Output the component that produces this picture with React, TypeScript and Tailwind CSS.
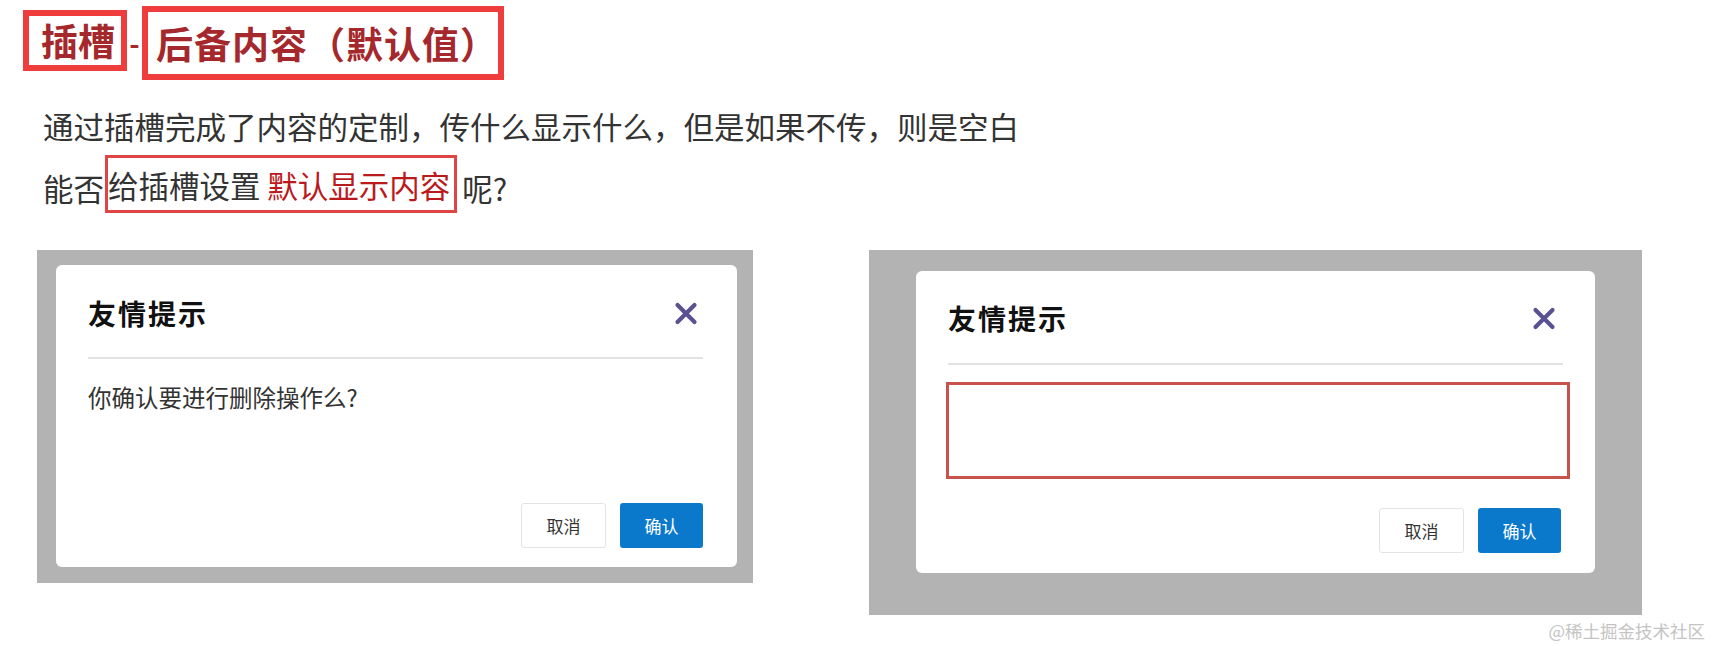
import React from "react";

const CJK = { fontFamily: '"Noto Sans CJK SC", "Noto Sans", sans-serif' };

function CloseX() {
  return (
    <svg width="24" height="23" viewBox="0 0 24 23" fill="none">
      <path d="M3.5 3 L20.5 20 M20.5 3 L3.5 20" stroke="#5a5190" strokeWidth="4.2" strokeLinecap="round" />
    </svg>
  );
}

function Buttons() {
  return (
    <div className="flex gap-[14px]">
      <button className="w-[85px] h-[45px] border border-[#e3e3e3] rounded-[3px] bg-white text-[17px] text-[#333]">
        取消
      </button>
      <button className="w-[83px] h-[45px] rounded-[3px] bg-[#0a79cc] text-[17px] text-white">
        确认
      </button>
    </div>
  );
}

export default function App() {
  return (
    <div className="relative w-[1713px] h-[646px] overflow-hidden bg-white" style={CJK}>
      {/* Title */}
      <div className="flex items-start pl-[23px] pt-[6px]">
        <div className="mt-[4px] h-[61px] border-[6px] border-[#ef3c3c] pl-[12px] pr-[6px] text-[37px] font-bold leading-[49px] text-[#a5282c]">
          插槽
        </div>
        <div className="w-[15px] h-[74px] text-center text-[28px] font-bold leading-[74px] text-[#a5282c]">-</div>
        <div className="h-[74px] border-[6px] border-[#ef3c3c] pl-[8px] pr-[0px] text-[37px] font-bold tracking-[1px] leading-[62px] text-[#a5282c]">
          后备内容（默认值）
        </div>
      </div>

      {/* Paragraphs */}
      <div className="pl-[43px] text-[30.5px] text-[#333]">
        <p className="mt-[26px] leading-[40px] whitespace-nowrap">
          通过插槽完成了内容的定制，传什么显示什么，但是如果不传，则是空白
        </p>
        <div className="mt-[9px] flex h-[58px] items-start whitespace-pre">
          <span className="pt-[8px] leading-[50px]">能否</span>
          <span className="ml-[1px] h-[58px] border-[3px] border-[#e04545] pt-[5px] pr-[4px] leading-[44px]">
            给插槽设置 <span className="text-[#bb1a1d]">默认显示内容</span>
          </span>
          <span className="ml-[5px] pt-[8px] leading-[50px]">呢?</span>
        </div>
      </div>

      {/* Dialogs */}
      <div className="mt-[37px] flex items-start gap-[116px] pl-[37px]">
        <div className="bg-[#b3b3b3] pt-[15px] pl-[19px] pr-[16px] pb-[16px]">
          <div className="flex h-[302px] w-[681px] flex-col rounded-[6px] bg-white pl-[32px] pr-[34px]">
            <div className="mt-[30px] flex h-[36px] items-center justify-between">
              <span className="text-[28px] font-bold tracking-[2px] text-[#111]">友情提示</span>
              <span className="mr-[5px] flex">
                <CloseX />
              </span>
            </div>
            <div className="mt-[26px] h-[2px] bg-[#e2e2e2]" />
            <p className="mt-[23px] text-[23.5px] leading-[30px] text-[#333]">你确认要进行删除操作么?</p>
            <div className="mt-auto flex justify-end pb-[19px]">
              <Buttons />
            </div>
          </div>
        </div>

        <div className="bg-[#b3b3b3] pt-[21px] pl-[47px] pr-[47px] pb-[42px]">
          <div className="flex h-[302px] w-[679px] flex-col rounded-[6px] bg-white px-[32px]">
            <div className="mt-[29px] flex h-[36px] items-center justify-between">
              <span className="text-[28px] font-bold tracking-[2px] text-[#111]">友情提示</span>
              <span className="mr-[7px] flex">
                <CloseX />
              </span>
            </div>
            <div className="mt-[27px] h-[2px] bg-[#e2e2e2]" />
            <div className="-ml-[2px] -mr-[7px] mt-[17px] h-[97px] border-[3px] border-[#c8524e]" />
            <div className="mt-auto flex justify-end pb-[20px] mr-[2px]">
              <Buttons />
            </div>
          </div>
        </div>
      </div>

      <div className="absolute right-[8px] top-[620px] text-[17.5px] leading-[22px] text-[#c4c4c4]">
        @稀土掘金技术社区
      </div>
    </div>
  );
}
